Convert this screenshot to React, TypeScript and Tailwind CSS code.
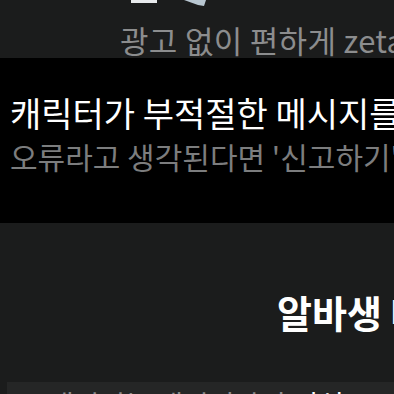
export default function App() {
  return (
    <div
      className="w-[394px] h-[394px] overflow-hidden bg-[#1b1c1c] flex flex-col"
      style={{ fontFamily: '"Noto Sans CJK KR", "Noto Sans", sans-serif' }}
    >
      {/* bottom edge of the banner image above */}
      <div className="h-[58px] flex flex-col shrink-0">
        <div className="h-[4px] flex items-start">
          <div className="ml-[131px] w-[26px] h-[3px] bg-[#e8eaec]" />
          <svg className="ml-[27px]" width="22" height="6" viewBox="0 0 22 6">
            <polygon points="0,0 22,0 20,6 14,5" fill="#b8c6d0" />
          </svg>
        </div>
        <div className="mt-[18px] pl-[120px] whitespace-nowrap text-[31px] leading-[36px] text-[#8c8d8e] tracking-[0.3px]">
          광고 없이 편하게 zeta를 즐겨보세요
        </div>
      </div>

      {/* notice band */}
      <div className="h-[165px] shrink-0 bg-black flex flex-col pt-[33px] pl-[10px] whitespace-nowrap">
        <div className="text-[34px] leading-[44px] text-white">
          캐릭터가 부적절한 메시지를 보낸다면
        </div>
        <div className="mt-[2px] text-[30px] leading-[38px] text-[#7c7d7e]">
          오류라고 생각된다면 '신고하기'를 눌러주세요
        </div>
      </div>

      {/* next card */}
      <div className="mt-[66px] pl-[277px] whitespace-nowrap text-[38px] leading-[46px] font-bold text-white">
        알바생 대화
      </div>
      <div className="mt-[47px] ml-[7px] h-[20px] bg-[#252626] pl-[41px] pt-[6px] whitespace-nowrap text-[28px] leading-[32px] text-[#8a8b8c]">
        재미있는 캐릭터와의 <span className="text-white">편식</span>
      </div>
    </div>
  );
}
